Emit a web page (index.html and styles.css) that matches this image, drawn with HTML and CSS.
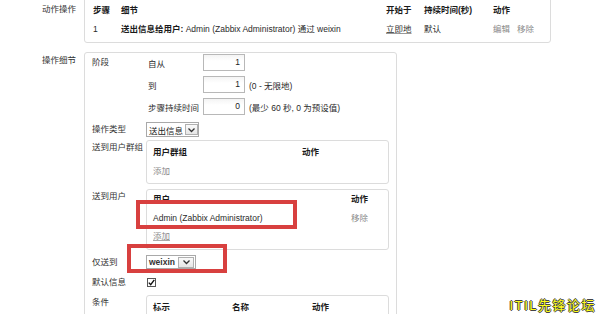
FILE: index.html
```html
<!DOCTYPE html>
<html lang="zh-CN">
<head>
<meta charset="utf-8">
<title>动作操作</title>
<link rel="stylesheet" href="styles.css">
</head>
<body>
<div class="page">
  <section class="field field-ops">
    <div class="flabel">动作操作</div>
    <div class="box ops">
      <div class="ops-row ops-head">
        <span>步骤</span><span>细节</span><span>开始于</span><span>持续时间(秒)</span><span>动作</span>
      </div>
      <div class="ops-row">
        <span>1</span>
        <span><b>送出信息给用户:</b> Admin (Zabbix Administrator) 通过 weixin</span>
        <span><a class="ulink">立即地</a></span>
        <span>默认</span>
        <span class="acts"><a class="glink">编辑</a><a class="glink">移除</a></span>
      </div>
    </div>
  </section>

  <section class="field field-detail">
    <div class="flabel">操作细节</div>
    <div class="box detail">
      <div class="drow drow-step">
        <div class="dlabel">阶段</div>
        <div class="steps">
          <span class="slabel">自从</span><span class="input">1</span><span></span>
          <span class="slabel">到</span><span class="input">1</span><span class="hint">(0 - 无限地)</span>
          <span class="slabel">步骤持续时间</span><span class="input">0</span><span class="hint">(最少 60 秒, 0 为预设值)</span>
        </div>
      </div>

      <div class="drow drow-type">
        <div class="dlabel">操作类型</div>
        <div><div class="select sel-type"><span class="sel-text">送出信息</span><span class="sel-btn"><svg width="9" height="6" viewBox="0 0 9 6"><path d="M1.5 1.5 L4.5 4.5 L7.5 1.5" fill="none" stroke="#333" stroke-width="1.3"/></svg></span></div></div>
      </div>

      <div class="drow drow-groups">
        <div class="dlabel">送到用户群组</div>
        <div class="subbox groups">
          <div class="sub-row subhead"><span>用户群组</span><span>动作</span></div>
          <div class="sub-row gap3"><a class="glink">添加</a></div>
        </div>
      </div>

      <div class="drow drow-users">
        <div class="dlabel">送到用户</div>
        <div class="subbox users">
          <div class="sub-row subhead"><span>用户</span><span>动作</span></div>
          <div class="sub-row gap3"><span>Admin (Zabbix Administrator)</span><a class="glink">移除</a></div>
          <div class="sub-row gap2"><a class="glink uline">添加</a></div>
        </div>
      </div>

      <div class="drow drow-only">
        <div class="dlabel">仅送到</div>
        <div><div class="select sel-media"><span class="sel-text">weixin</span><span class="sel-btn"><svg width="9" height="6" viewBox="0 0 9 6"><path d="M1.5 1.5 L4.5 4.5 L7.5 1.5" fill="none" stroke="#333" stroke-width="1.3"/></svg></span></div></div>
      </div>

      <div class="drow drow-default">
        <div class="dlabel">默认信息</div>
        <div class="checkwrap"><svg class="check" width="9" height="9" viewBox="0 0 9 9"><rect x="0.5" y="0.5" width="8" height="8" fill="#fff" stroke="#555"/><path d="M1.8 4.6 L3.7 6.7 L7.3 1.9" fill="none" stroke="#111" stroke-width="1.4"/></svg></div>
      </div>

      <div class="drow drow-cond">
        <div class="dlabel">条件</div>
        <div class="subbox cond">
          <div class="sub-row subhead"><span>标示</span><span>名称</span><span>动作</span></div>
        </div>
      </div>
    </div>
  </section>

  <div class="mark mark-user"></div>
  <div class="mark mark-media"></div>
  <div class="watermark">ITIL先锋论坛</div>
</div>
</body>
</html>
```

FILE: styles.css
```css
html, body {
  margin: 0;
  background: #fff;
}
body {
  font-family: "Liberation Sans", "Noto Sans CJK SC", sans-serif;
  font-size: 8.5px;
  color: #2a2a2a;
}
.page {
  position: relative;
  width: 596px;
  height: 314px;
  overflow: hidden;
}
.field {
  display: grid;
  grid-template-columns: 84px auto;
  align-items: start;
}
.flabel {
  text-align: right;
  padding-right: 8px;
  color: #333;
}
.field-ops {
  margin-top: -8px;
}
.field-ops .flabel {
  padding-top: 8px;
  line-height: 19px;
}
.field-detail {
  margin-top: 9px;
}
.field-detail .flabel {
  padding-top: 1px;
  line-height: 15px;
}
.box {
  border: 1px solid #dcdcdc;
  border-radius: 3px;
  background: #fff;
  box-sizing: border-box;
}
.ops {
  width: 467px;
  padding: 8px 0 3px 8px;
}
.ops-row {
  display: grid;
  grid-template-columns: 28px 265px 38px 69px auto;
  line-height: 19px;
  white-space: nowrap;
}
.ops-head {
  font-weight: bold;
  color: #1a1a1a;
}
.ops-row b {
  color: #1a1a1a;
}
.ulink {
  color: #333;
  text-decoration: underline;
  text-decoration-color: #999;
}
.glink {
  color: #8a8a8a;
}
.uline {
  text-decoration: underline;
  text-decoration-color: #aaa;
}
.acts .glink + .glink {
  margin-left: 7px;
}
.detail {
  width: 313px;
  padding: 1px 0 30px 7px;
}
.drow {
  display: grid;
  grid-template-columns: 54px auto;
  align-items: start;
}
.dlabel {
  line-height: 15px;
  color: #333;
  white-space: nowrap;
}
.drow-step .dlabel {
  padding-top: 1px;
}
.steps {
  display: grid;
  grid-template-columns: 55px 42px auto;
  row-gap: 5px;
  align-items: center;
  padding-left: 2px;
}
.input {
  height: 17px;
  box-sizing: border-box;
  border: 1px solid #b8b8b8;
  background: linear-gradient(#f4f4f4, #fff 40%);
  text-align: right;
  padding-right: 4px;
  line-height: 15px;
  color: #222;
}
.hint {
  padding-left: 4px;
  white-space: nowrap;
}
.drow-type {
  margin-top: 7px;
}
.select {
  display: flex;
  align-items: center;
  justify-content: space-between;
  gap: 2px;
  box-sizing: border-box;
  border: 1px solid #a9a9a9;
  background: #fff;
  padding: 0 1px 0 2px;
  color: #222;
  white-space: nowrap;
}
.sel-text {
  white-space: nowrap;
}
.sel-type {
  width: 53px;
  height: 15px;
}
.sel-media {
  width: 50px;
  height: 14px;
  font-weight: bold;
  color: #333;
}
.sel-btn {
  display: flex;
  align-items: center;
  justify-content: center;
  flex: none;
  box-sizing: border-box;
  height: 11px;
  border: 1px solid #b0b0b0;
  background: linear-gradient(#fafafa, #e6e6e6);
}
.sel-type .sel-btn {
  width: 13px;
}
.sel-media .sel-btn {
  width: 16px;
}
.drow-groups {
  margin-top: 3px;
}
.drow-users {
  margin-top: 5px;
}
.drow-only {
  margin-top: 5px;
}
.drow-only .dlabel {
  line-height: 14px;
}
.drow-default {
  margin-top: 6px;
}
.checkwrap {
  height: 15px;
  display: flex;
  align-items: center;
  padding-left: 1px;
}
.check {
  display: block;
}
.drow-cond {
  margin-top: 5px;
}
.subbox {
  width: 243px;
  box-sizing: border-box;
  border: 1px solid #dcdcdc;
  border-radius: 3px;
  padding: 3px 0 4px 6px;
}
.sub-row {
  display: grid;
  line-height: 16px;
  white-space: nowrap;
}
.subhead {
  font-weight: bold;
  color: #1a1a1a;
}
.gap3 {
  margin-top: 3px;
}
.gap2 {
  margin-top: 2px;
}
.groups .sub-row {
  grid-template-columns: 149px auto;
}
.users {
  padding: 1px 0 5px 6px;
}
.users .sub-row {
  grid-template-columns: 198px auto;
}
.cond {
  padding-bottom: 20px;
}
.cond .sub-row {
  grid-template-columns: 79px 80px auto;
}
.mark {
  position: absolute;
  box-sizing: border-box;
  border: 4px solid #d8403f;
}
.mark-user {
  left: 136px;
  top: 200px;
  width: 161px;
  height: 29px;
}
.mark-media {
  left: 127px;
  top: 244px;
  width: 100px;
  height: 29px;
}
.watermark {
  position: absolute;
  right: 0;
  top: 298px;
  font-family: "Liberation Sans", "Noto Sans CJK SC", sans-serif;
  font-size: 13px;
  line-height: 15px;
  letter-spacing: 1.5px;
  color: #ffff1a;
  text-shadow: 1px 0 0 #444, -1px 0 0 #444, 0 1px 0 #444, 0 -1px 0 #444;
  white-space: nowrap;
}
```
